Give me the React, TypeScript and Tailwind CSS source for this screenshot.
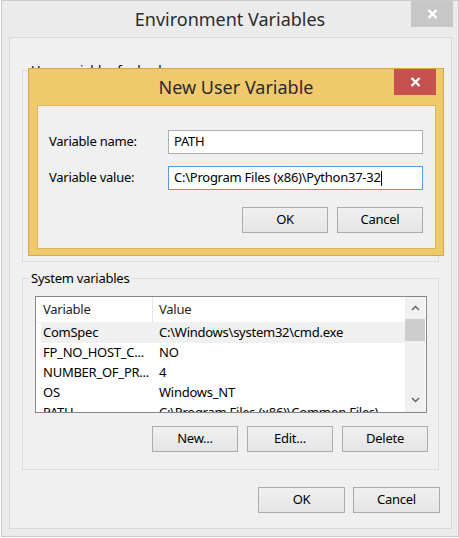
import React from "react";

type Row = { name: string; value: string; selected?: boolean };

const systemRows: Row[] = [
  { name: "ComSpec", value: "C:\\Windows\\system32\\cmd.exe", selected: true },
  { name: "FP_NO_HOST_C...", value: "NO" },
  { name: "NUMBER_OF_PR...", value: "4" },
  { name: "OS", value: "Windows_NT" },
  { name: "PATH", value: "C:\\Program Files (x86)\\Common Files\\..." },
];

const userRows: Row[] = [
  { name: "PATH", value: "C:\\Users\\backup\\AppData\\Local" },
  { name: "TEMP", value: "%USERPROFILE%\\AppData\\Local\\Temp" },
  { name: "TMP", value: "%USERPROFILE%\\AppData\\Local\\Temp" },
];

const WinButton: React.FC<{ label: string; className?: string }> = ({
  label,
  className = "",
}) => (
  <button
    type="button"
    className={`flex h-[26px] items-center justify-center border border-[#acacac] bg-linear-to-b from-[#f0f0f0] to-[#e5e5e5] text-[13px] text-black ${className}`}
  >
    {label}
  </button>
);

const Chevron: React.FC<{ up?: boolean }> = ({ up }) => (
  <svg width="9" height="6" viewBox="0 0 9 6">
    <path
      d={up ? "M1 5 L4.5 1.5 L8 5" : "M1 1 L4.5 4.5 L8 1"}
      fill="none"
      stroke="#606060"
      strokeWidth="1.4"
    />
  </svg>
);

const CloseGlyph: React.FC = () => (
  <svg width="11" height="10" viewBox="0 0 11 10">
    <path d="M1.5 1 L9.5 9 M9.5 1 L1.5 9" stroke="white" strokeWidth="2.4" />
  </svg>
);

const ListView: React.FC<{ rows: Row[] }> = ({ rows }) => (
  <div className="ml-[12px] flex h-[117px] w-[392px] border border-[#828790] bg-white">
    <div className="flex-1 overflow-hidden">
      <div className="flex h-[26px] items-center border-b border-[#eef2f6] bg-white text-[13px] text-[#1e1e1e]">
        <div className="w-[116px] pl-[7px]">Variable</div>
        <div className="h-full w-px bg-[#e3e8ee]" />
        <div className="pl-[6px]">Value</div>
      </div>
      {rows.map((r) => (
        <div
          key={r.name}
          className={`ml-[5px] flex h-[20px] items-center whitespace-nowrap text-[13px] text-black ${
            r.selected ? "bg-[#f0f0f0]" : ""
          }`}
        >
          <div className="w-[112px] pl-[2px]">{r.name}</div>
          <div className="pl-[6px]">{r.value}</div>
        </div>
      ))}
    </div>
    <div className="flex w-[20px] flex-col items-center bg-[#f0f0f0]">
      <div className="flex h-[22px] items-center justify-center">
        <Chevron up />
      </div>
      <div className="h-[22px] w-full bg-[#cdcdcd]" />
      <div className="flex-1" />
      <div className="flex h-[24px] items-center justify-center">
        <Chevron />
      </div>
    </div>
    <div className="w-px" />
  </div>
);

const App: React.FC = () => {
  return (
    <div className="relative h-[538px] w-[459px] overflow-hidden bg-white font-['Noto_Sans','Open_Sans',sans-serif] tracking-[-0.25px]">
      {/* Environment Variables window (inactive) */}
      <div className="ml-px flex h-[537px] w-[458px] flex-col border border-[#cbcbcb] bg-[#ebebeb]">
        <div className="relative flex h-[36px] items-center justify-center">
          <span className="text-[18px] tracking-normal text-[#2b2b2b]">Environment Variables</span>
          <div className="absolute right-[5px] top-0 flex h-[26px] w-[42px] items-center justify-center bg-[#c7c7c7]">
            <CloseGlyph />
          </div>
        </div>
        <div className="ml-[7px] h-[492px] w-[443px] border border-[#d9d9d9] bg-[#f0f0f0]">
          <fieldset className="ml-[12px] mt-[23px] h-[201px] w-[417px] border border-[#dcdcdc]">
            <legend className="ml-[6px] px-[2px] text-[13px] leading-[18px] text-black">
              User variables for backup
            </legend>
            {/* covered by the New User Variable dialog */}
            <div className="invisible">
              <div className="mt-[8px]">
                <ListView rows={userRows} />
              </div>
              <div className="mt-[14px] flex justify-end gap-[9px] pr-[10px]">
                <WinButton label="New..." className="w-[86px]" />
                <WinButton label="Edit..." className="w-[86px]" />
                <WinButton label="Delete" className="w-[86px]" />
              </div>
            </div>
          </fieldset>
          <fieldset className="ml-[12px] mt-[8px] h-[200px] w-[417px] border border-[#dcdcdc]">
            <legend className="ml-[6px] px-[2px] text-[13px] leading-[17px] text-black">
              System variables
            </legend>
            <div className="mt-[9px]">
              <ListView rows={systemRows} />
            </div>
            <div className="mt-[13px] flex justify-end gap-[9px] pr-[10px]">
              <WinButton label="New..." className="w-[86px]" />
              <WinButton label="Edit..." className="w-[86px]" />
              <WinButton label="Delete" className="w-[86px]" />
            </div>
          </fieldset>
          <div className="mt-[17px] flex justify-end gap-[8px] pr-[11px]">
            <WinButton label="OK" className="w-[87px]" />
            <WinButton label="Cancel" className="w-[87px]" />
          </div>
        </div>
      </div>

      {/* New User Variable dialog, floating over the window */}
      <div className="absolute left-[28px] top-[68px] flex h-[188px] w-[416px] flex-col border border-[#d3a94e] bg-[#f0c96b]">
        <div className="relative flex h-[36px] items-center justify-center">
          <span className="text-[18px] tracking-normal text-[#2b2b2b]">New User Variable</span>
          <div className="absolute right-[7px] top-0 flex h-[26px] w-[42px] items-center justify-center bg-[#c75050]">
            <CloseGlyph />
          </div>
        </div>
        <div className="ml-[8px] h-[144px] w-[399px] border border-[#dcb45e] bg-[#f0f0f0]">
          <div className="mt-[24px] flex items-center pl-[11px]">
            <div className="w-[119px] text-[13px] text-black">Variable name:</div>
            <div className="flex h-[24px] w-[255px] items-center border border-[#abadb3] bg-white pl-[5px] text-[13px] text-black">
              PATH
            </div>
          </div>
          <div className="mt-[12px] flex items-center pl-[11px]">
            <div className="w-[119px] text-[13px] text-black">Variable value:</div>
            <div className="flex h-[24px] w-[255px] items-center border border-[#569de5] bg-white pl-[5px] text-[13px] text-black">
              <span className="whitespace-nowrap">C:\Program Files (x86)\Python37-32</span>
              <span className="h-[15px] w-px bg-black" />
            </div>
          </div>
          <div className="mt-[17px] flex justify-end gap-[9px] pr-[12px]">
            <WinButton label="OK" className="w-[86px]" />
            <WinButton label="Cancel" className="w-[86px]" />
          </div>
        </div>
      </div>
    </div>
  );
};

export default App;
